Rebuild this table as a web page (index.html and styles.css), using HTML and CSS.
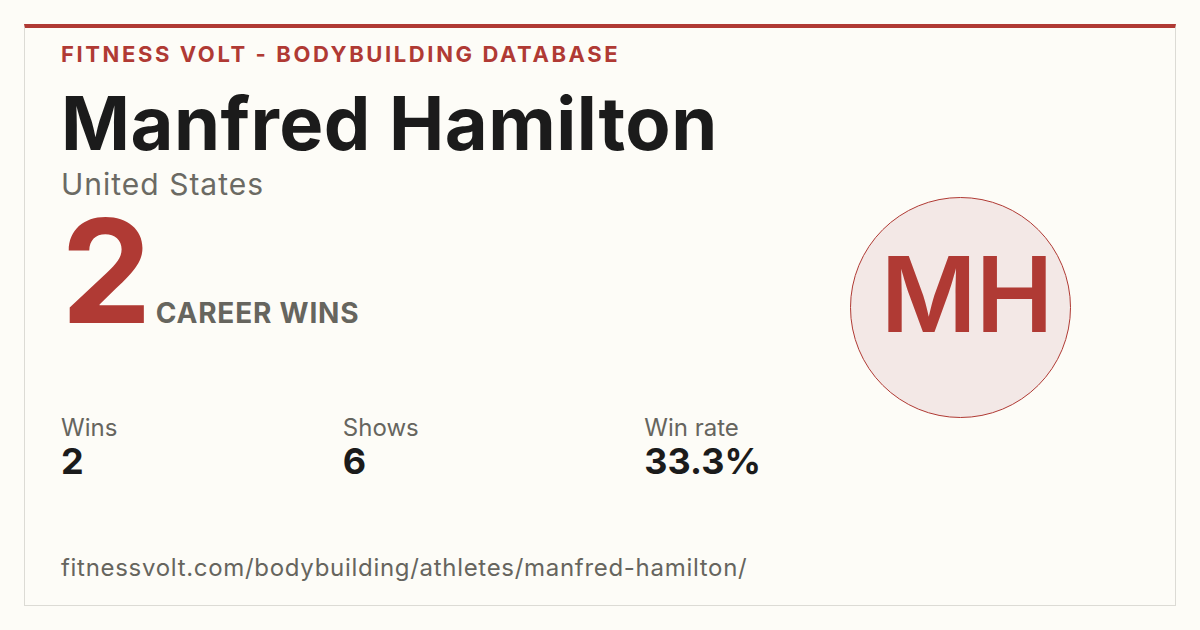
FILE: index.html
```html
<!DOCTYPE html>
<html lang="en">
<head>
<meta charset="utf-8">
<title>Manfred Hamilton - Fitness Volt</title>
<link rel="stylesheet" href="styles.css">
</head>
<body>
<div class="card">
  <div class="main">
    <div class="brand">FITNESS VOLT - BODYBUILDING DATABASE</div>
    <h1 class="name">Manfred Hamilton</h1>
    <div class="country">United States</div>
    <div class="hero">
      <span class="hero-num">2</span>
      <span class="hero-label">CAREER WINS</span>
    </div>
    <div class="stats">
      <div class="stat">
        <div class="stat-label">Wins</div>
        <div class="stat-value">2</div>
      </div>
      <div class="stat">
        <div class="stat-label">Shows</div>
        <div class="stat-value">6</div>
      </div>
      <div class="stat">
        <div class="stat-label">Win rate</div>
        <div class="stat-value">33.3%</div>
      </div>
    </div>
    <div class="url">fitnessvolt.com/bodybuilding/athletes/manfred-hamilton/</div>
  </div>
  <div class="side">
    <div class="avatar">MH</div>
  </div>
</div>
</body>
</html>
```

FILE: styles.css
```css
html, body {
  margin: 0;
  padding: 0;
  background: #fdfcf7;
}
body {
  padding: 24px;
  font-family: Inter, "Liberation Sans", sans-serif;
}
.card {
  box-sizing: border-box;
  width: 1152px;
  height: 582px;
  border: 1px solid #dcdbd5;
  border-top: 4px solid #b03a34;
  background: #fdfcf7;
  display: flex;
  padding: 11px 36px 0 36px;
}
.main {
  flex: 1;
  display: flex;
  flex-direction: column;
}
.brand {
  color: #b03a34;
  font-size: 22px;
  font-weight: 700;
  letter-spacing: 2.6px;
  line-height: 30px;
}
.name {
  margin: 14px 0 0 0;
  font-size: 74px;
  font-weight: 700;
  line-height: 80px;
  color: #1b1b1b;
  letter-spacing: 0.5px;
}
.country {
  font-size: 30px;
  color: #6b6a63;
  line-height: 36px;
  margin-top: 3px;
  letter-spacing: 1px;
}
.hero {
  display: flex;
  align-items: baseline;
  margin-top: 4px;
}
.hero-num {
  font-size: 144px;
  font-weight: 700;
  color: #b03a34;
  line-height: 130px;
  letter-spacing: -4px;
}
.hero-label {
  font-size: 28px;
  font-weight: 700;
  color: #66655e;
  margin-left: 8px;
  letter-spacing: 0.8px;
}
.stats {
  display: flex;
  justify-content: space-between;
  width: 700px;
  margin-top: 78px;
}
.stat-label {
  font-size: 24px;
  color: #66655e;
  line-height: 28px;
}
.stat-value {
  font-size: 36px;
  font-weight: 700;
  color: #1b1b1b;
  line-height: 38px;
}
.url {
  margin-top: 74px;
  font-size: 24px;
  color: #66655e;
  line-height: 28px;
  letter-spacing: 0.7px;
}
.side {
  display: flex;
  align-items: center;
  padding-right: 68px;
  padding-bottom: 30px;
}
.avatar {
  box-sizing: border-box;
  width: 221px;
  height: 221px;
  border-radius: 50%;
  border: 1.5px solid #b03a34;
  background: #f3e8e6;
  color: #b03a34;
  font-size: 104px;
  font-weight: 600;
  display: flex;
  align-items: center;
  justify-content: center;
  letter-spacing: -1px;
  padding: 0 0 26px 12px;
}
```
